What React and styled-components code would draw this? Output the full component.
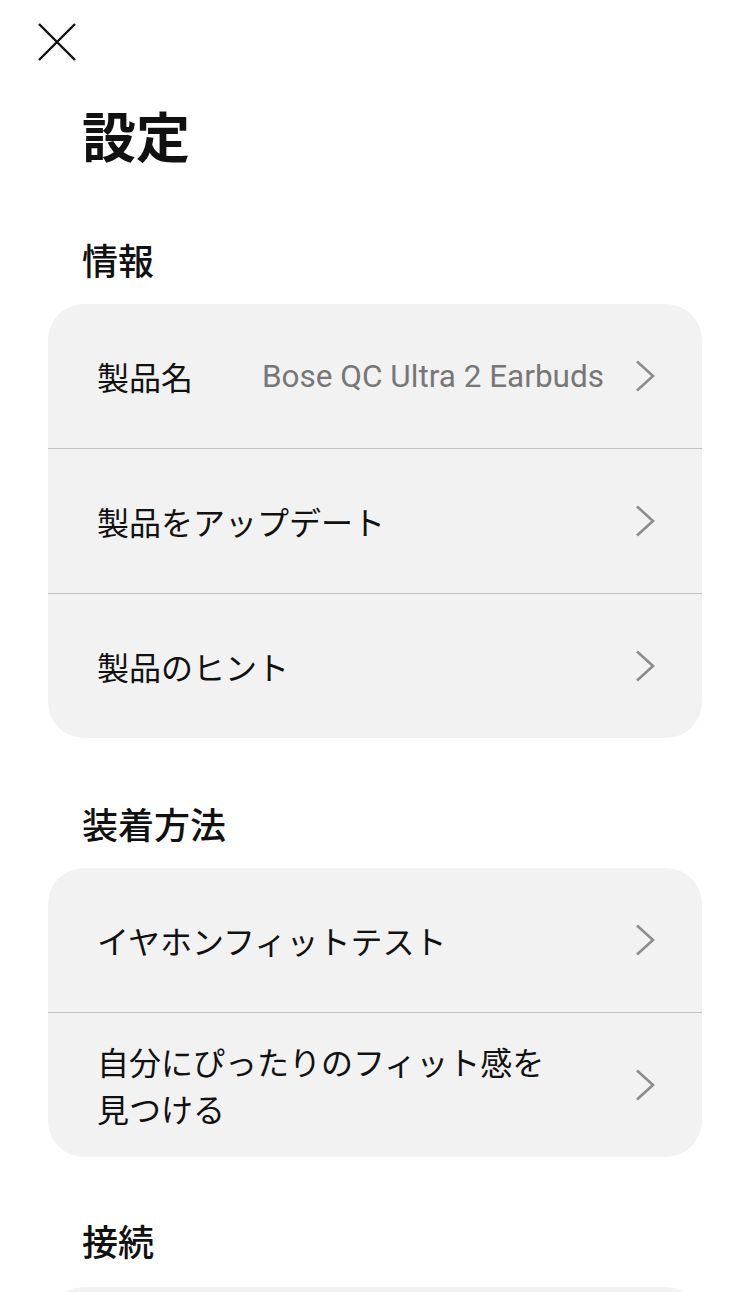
import React from "react";
import styled, { createGlobalStyle } from "styled-components";

const Global = createGlobalStyle`
  html, body { margin: 0; padding: 0; background: #fff; }
  body { font-family: "Noto Sans CJK JP", "Noto Sans", sans-serif; color: #111; }
  * { box-sizing: border-box; }
`;

const Page = styled.div`
  width: 750px;
  height: 1292px;
  overflow: hidden;
  padding: 23px 48px 0;
  display: flex;
  flex-direction: column;
`;

const CloseButton = styled.button`
  width: 38px;
  height: 38px;
  padding: 0;
  margin-left: -10px;
  border: none;
  background: none;
  display: flex;
  align-items: center;
  justify-content: center;
  cursor: pointer;
  flex-shrink: 0;
`;

const Title = styled.h1`
  margin: 41px 0 0 34px;
  font-size: 54px;
  line-height: 65px;
  font-weight: 700;
  color: #111;
`;

const SectionTitle = styled.h2`
  margin: ${(p) => p.$top}px 0 0 34px;
  font-size: 36px;
  line-height: 42px;
  font-weight: 500;
  color: #111;
`;

const Card = styled.div`
  margin-top: ${(p) => p.$top ?? 24}px;
  background: #f2f2f2;
  border-radius: 36px;
  overflow: hidden;
  display: flex;
  flex-direction: column;
  flex-shrink: 0;
`;

const Row = styled.div`
  display: flex;
  align-items: center;
  padding: 0 47px 0 49px;
  border-top: ${(p) => (p.$first ? "none" : "1px solid #c4c4c4")};
  height: ${(p) => (p.$first ? 144 : 145)}px;
`;

const Label = styled.div`
  flex: 1;
  font-size: 32px;
  line-height: 47px;
  font-weight: 400;
  color: #111;
  max-width: 460px;
`;

const Value = styled.div`
  margin-left: auto;
  margin-right: 31px;
  font-family: Roboto, "Noto Sans", sans-serif;
  font-size: 31.5px;
  color: #777;
  white-space: nowrap;
`;

const ChevronWrap = styled.div`
  margin-left: auto;
  width: 20px;
  height: 32px;
  display: flex;
  flex-shrink: 0;
`;

const Chevron = () => (
  <ChevronWrap>
    <svg width="20" height="32" viewBox="0 0 20 32">
      <path d="M2 1.5 L18 16 L2 30.5" fill="none" stroke="#8c8c8c" strokeWidth="2.6" />
    </svg>
  </ChevronWrap>
);

const SettingRow = ({ label, value, first }) => (
  <Row $first={first}>
    <Label>{label}</Label>
    {value && <Value>{value}</Value>}
    <Chevron />
  </Row>
);

export default function App() {
  return (
    <>
      <Global />
      <Page>
        <CloseButton aria-label="閉じる">
          <svg width="38" height="38" viewBox="0 0 38 38">
            <path d="M1 1 L37 37 M37 1 L1 37" stroke="#111" strokeWidth="2.4" fill="none" />
          </svg>
        </CloseButton>
        <Title>設定</Title>

        <SectionTitle $top={71}>情報</SectionTitle>
        <Card>
          <SettingRow first label="製品名" value="Bose QC Ultra 2 Earbuds" />
          <SettingRow label="製品をアップデート" />
          <SettingRow label="製品のヒント" />
        </Card>

        <SectionTitle $top={64}>装着方法</SectionTitle>
        <Card>
          <SettingRow first label="イヤホンフィットテスト" />
          <SettingRow label="自分にぴったりのフィット感を見つける" />
        </Card>

        <SectionTitle $top={62}>接続</SectionTitle>
        <Card $top={26}>
          <Row $first />
        </Card>
      </Page>
    </>
  );
}
